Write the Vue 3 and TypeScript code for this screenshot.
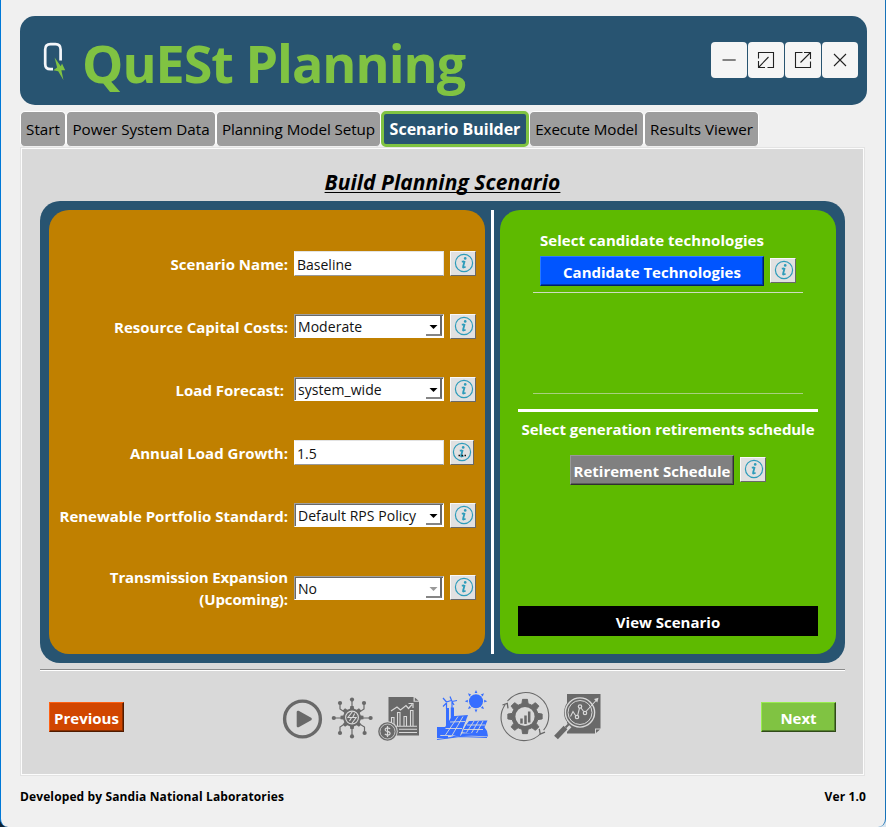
<script setup lang="ts">
import { ref } from 'vue'
import type { Ref } from 'vue'

interface Field {
  label: string
  value: string
  kind: 'text' | 'combo'
  disabled?: boolean
  shifted?: boolean
  dots?: boolean
}

const tabs: string[] = [
  'Start',
  'Power System Data',
  'Planning Model Setup',
  'Scenario Builder',
  'Execute Model',
  'Results Viewer',
]
const activeTab: Ref<string> = ref('Scenario Builder')

const fields: Field[] = [
  { label: 'Scenario Name:', value: 'Baseline', kind: 'text' },
  { label: 'Resource Capital Costs:', value: 'Moderate', kind: 'combo' },
  { label: 'Load Forecast:', value: 'system_wide', kind: 'combo', shifted: true },
  { label: 'Annual Load Growth:', value: '1.5', kind: 'text', dots: true },
  { label: 'Renewable Portfolio Standard:', value: 'Default RPS Policy', kind: 'combo' },
  { label: 'Transmission Expansion\n(Upcoming):', value: 'No', kind: 'combo', disabled: true },
]

/** Builds a closed outline of a gear with flat-topped teeth. */
function gear(cx: number, cy: number, outer: number, inner: number, teeth: number): string {
  const step = (Math.PI * 2) / teeth
  const parts: string[] = []
  for (let i = 0; i < teeth; i++) {
    const a = i * step
    const corners: [number, number][] = [
      [inner, a - step * 0.3],
      [outer, a - step * 0.18],
      [outer, a + step * 0.18],
      [inner, a + step * 0.3],
    ]
    for (const [r, t] of corners) {
      parts.push(`${(cx + r * Math.sin(t)).toFixed(2)} ${(cy - r * Math.cos(t)).toFixed(2)}`)
    }
  }
  return `M${parts.join('L')}Z`
}

const networkGear = gear(352, 717.5, 11.6, 9, 8)
const processGear = gear(525, 716.5, 17.3, 13.2, 8)
const nodes: [number, number][] = [
  [352, 699.6], [352, 736.4], [333.8, 718], [370.6, 718],
  [340, 703], [364, 703], [340, 733], [364.6, 733],
]
const sunRays: number[] = [0, 45, 90, 135, 180, 225, 270, 315]
</script>

<template>
  <div class="window">
    <header class="banner">
      <svg class="logo" viewBox="40 40 30 44" width="30" height="44">
        <path d="M53 70.200H50.500Q45.200 70.200 45.200 65V50.500Q45.200 45.200 50.500 45.200H55.500Q60.600 45.200 60.600 50.500V61.500" fill="none" stroke="#f4f6fa" stroke-width="2.700" />
        <path d="M54.600 58.500L60.800 67.200L62 64.500L65.200 71.300L61.400 71.200L63.400 81L58.200 72.300L53.400 71.300L57.100 68.500Z" fill="#80c342" />
      </svg>
      <h1>QuESt Planning</h1>
      <div class="controls">
        <button aria-label="Minimize"><svg viewBox="0 0 36 36"><path d="M11.500 18H24.700" stroke="#777" stroke-width="1.800" /></svg></button>
        <button aria-label="Restore"><svg viewBox="0 0 36 36"><path d="M10.500 16.500V10.500H25.500V25.500H19.500M10.500 19V25.500H17M10.500 25.500L20.500 15" /></svg></button>
        <button aria-label="Maximize"><svg viewBox="0 0 36 36"><path d="M17.500 10.500H10.500V25.500H25.500V19.500M19 10.500H25.500V17M25.500 10.500L15.500 20.500" /></svg></button>
        <button aria-label="Close"><svg viewBox="0 0 36 36"><path d="M12 12L24 24M24 12L12 24" /></svg></button>
      </div>
    </header>

    <nav class="tabs">
      <button v-for="tab in tabs" :key="tab" :class="{ active: tab === activeTab }" @click="activeTab = tab">{{ tab }}</button>
    </nav>

    <main class="page">
      <h2>Build Planning Scenario</h2>

      <section class="frame">
        <div class="settings">
          <div v-for="field in fields" :key="field.label" class="row">
            <label :class="{ shifted: field.shifted }">{{ field.label }}</label>
            <div v-if="field.kind === 'text'" class="textbox">{{ field.value }}</div>
            <div v-else class="combo" :class="{ disabled: field.disabled }">
              <span>{{ field.value }}</span>
              <i class="drop"><svg viewBox="0 0 15 20" width="15" height="20"><path d="M3.500 9H11.500L7.500 13Z" /></svg></i>
            </div>
            <button class="info" :class="{ small: field.dots }" aria-label="Info">
              <svg viewBox="0 0 20 20"><circle cx="10" cy="10" r="8.600" /><circle class="fill" cx="11.200" cy="5.400" r="1.300" /><path d="M7.800 8.700Q10.500 8.400 10.700 8.100L9 14.300Q9 15 11.600 13.700M10.500 8.400L8.900 14" /><path v-if="field.dots" class="dots" d="M6.500 13.500H8M9.500 13.500H11M12.500 13.500H14" /></svg>
            </button>
          </div>
        </div>

        <div class="divider"></div>

        <div class="actions">
          <h3>Select candidate technologies</h3>
          <div class="pair first">
            <button class="btn candidate">Candidate Technologies</button>
            <button class="info" aria-label="Info"><svg viewBox="0 0 20 20"><circle cx="10" cy="10" r="8.600" /><circle class="fill" cx="11.200" cy="5.400" r="1.300" /><path d="M7.800 8.700Q10.500 8.400 10.700 8.100L9 14.300Q9 15 11.600 13.700M10.500 8.400L8.900 14" /></svg></button>
          </div>
          <div class="list"></div>
          <div class="rule"></div>
          <h3 class="retire">Select generation retirements schedule</h3>
          <div class="pair second">
            <button class="btn retirement">Retirement Schedule</button>
            <button class="info" aria-label="Info"><svg viewBox="0 0 20 20"><circle cx="10" cy="10" r="8.600" /><circle class="fill" cx="11.200" cy="5.400" r="1.300" /><path d="M7.800 8.700Q10.500 8.400 10.700 8.100L9 14.300Q9 15 11.600 13.700M10.500 8.400L8.900 14" /></svg></button>
          </div>
          <button class="view">View Scenario</button>
        </div>
      </section>

      <hr />

      <div class="wizard">
        <button class="btn previous">Previous</button>
        <div class="steps">
          <svg viewBox="280 688 48 56" width="48" height="56">
            <circle cx="302.500" cy="719" r="17.900" fill="none" stroke="#696969" stroke-width="3.400" />
            <path d="M298 712L310.500 719L298 726Z" fill="#696969" stroke="#696969" stroke-width="2.600" stroke-linejoin="round" />
          </svg>
          <svg viewBox="328 688 48 56" width="48" height="56">
            <path d="M352 700V736M334 718H370M340 703V709L346 713M364 703V709L358 713M340 733V727L346 723M364.500 733V727L358 723" fill="none" stroke="#696969" stroke-width="1.200" />
            <path :d="networkGear" fill="#696969" />
            <circle v-for="(node, i) in nodes" :key="i" :cx="node[0]" :cy="node[1]" r="2.100" fill="#696969" />
            <circle cx="352" cy="717.500" r="6.400" fill="none" stroke="#d9d9d9" stroke-width="1.100" />
            <path d="M352.500 711.500L348 717.500H351.500L349.500 721M351.800 723.500L356.200 717.500H352.700L354.700 713.500" fill="none" stroke="#d9d9d9" stroke-width="1.100" />
          </svg>
          <svg viewBox="376 688 50 56" width="50" height="56">
            <path d="M388.500 697H413.500V701.800H419V735.500H388.500Z" fill="#696969" />
            <path d="M414.800 697.500L418.600 700.800H414.800Z" fill="#696969" />
            <path d="M391 711L397 707L400.500 710L406 705.500L408.500 708.500L412 704.500M408.500 703.500H413V708" fill="none" stroke="#d9d9d9" stroke-width="1.200" />
            <path d="M391.500 726V717.500H394V726M397.500 726V712.500H400V726M404 726V716.500H406.500V726M410.500 726V710.500H413V726M389 726.300H417M399 729.300H417M399 732.500H417" fill="none" stroke="#d9d9d9" stroke-width="1.100" />
            <circle cx="387.500" cy="731.500" r="10.200" fill="#d9d9d9" />
            <circle cx="387.500" cy="731.500" r="8.500" fill="#696969" stroke="#696969" stroke-width="1.600" />
            <circle cx="387.500" cy="731.500" r="7.500" fill="none" stroke="#d9d9d9" stroke-width=".8" />
            <path d="M390.200 728.800Q387.500 727 385.500 728.600Q384.300 731 387.500 731.400Q391 732.300 389.800 734.300Q388 736 384.800 734M387.500 726V737" fill="none" stroke="#d9d9d9" stroke-width="1.200" />
          </svg>
          <svg viewBox="426 688 68 56" width="68" height="56">
            <g fill="#366eff">
              <circle cx="476" cy="701.200" r="7" />
              <path v-for="ray in sunRays" :key="ray" d="M476 690L477.400 693H474.600Z" :transform="`rotate(${ray} 476 701.200)`" />
              <path d="M446 708H449V722L446 728ZM450.800 707.500H454V716L450.800 721Z" />
              <path d="M437 727H446L440 736H448V738H437Z" />
              <path d="M452 716.200L468 715L460 735.500L440 735Z" />
              <path d="M469 721L487.500 720.500L481 735L461 732Z" />
              <path d="M483.500 726L487 731L488 736.500Q462 734 444 739Q454 736 460 733.500L478 733Z" />
            </g>
            <g fill="none" stroke="#366eff" stroke-width="1.200">
              <path d="M446.500 703V709M452 702V709M446.500 703L443 706.500M446.500 702L443 698M446.500 702L451 700.500M452 701.500L450 696.500M452 701.500L457 700.500M452 701.500L454 705" />
              <path d="M437 739.500L460 736.500L487 737.500" />
            </g>
            <path d="M458 716.500L445.500 735M463 716.500L452 735.500M450 722L465 721.500M445.500 728.500L462 728.500M474 721L466.500 732.500M478.500 721L471.500 733M483 721L476.500 733M467 725H485M464 729.500H483" fill="none" stroke="#d9d9d9" stroke-width=".9" />
            <path d="M469 716L460.500 735.500" fill="none" stroke="#d9d9d9" stroke-width="1" />
          </svg>
          <svg viewBox="494 688 56 56" width="56" height="56">
            <path d="M507.500 701.200A23 23 0 0 1 543.600 730.200M541.200 733A23 23 0 0 1 505.200 704.500" fill="none" stroke="#696969" stroke-width="1.100" />
            <path d="M502.500 705L507.300 703.300L508 708.300M539.300 728.800L540.200 734.200L545 732.200" fill="none" stroke="#696969" stroke-width="1.300" />
            <path :d="processGear" fill="#696969" stroke="#696969" stroke-width="1" stroke-linejoin="round" />
            <circle cx="525" cy="716.500" r="9.600" fill="#d9d9d9" />
            <path d="M521.500 723.500V718.500M525.500 724V715.500M529.200 722.500V711.500" stroke="#696969" stroke-width="2.500" />
          </svg>
          <svg viewBox="550 688 56 56" width="56" height="56">
            <path d="M567 694H600.500V728.500H595V733.500H567Z" fill="#696969" />
            <path d="M596 733V729.500H600Z" fill="#696969" />
            <path d="M568.500 724.500L556.500 737" stroke="#d9d9d9" stroke-width="8" />
            <path d="M570 723L565.500 727.500" stroke="#696969" stroke-width="2" />
            <path d="M565.500 727.500L556 737.500" stroke="#696969" stroke-width="5.200" />
            <circle cx="580" cy="712.500" r="16" fill="#696969" />
            <circle cx="580" cy="712.500" r="14.600" fill="none" stroke="#d9d9d9" stroke-width="1.400" />
            <circle cx="580" cy="712.500" r="12" fill="none" stroke="#d9d9d9" stroke-width="1" />
            <path d="M570.500 716.500L573 711.500L575.700 715.800M577.700 715.300L579.500 708M581 708L583.700 711.500M586 711.500L596.500 700" fill="none" stroke="#d9d9d9" stroke-width="1.100" />
            <path d="M594 699L598.500 697.800L597.300 702.500Z" fill="#d9d9d9" />
            <g fill="none" stroke="#d9d9d9" stroke-width="1.200"><circle cx="577" cy="717" r="1.700" /><circle cx="580" cy="706.500" r="1.700" /><circle cx="585" cy="713" r="1.700" /></g>
          </svg>
        </div>
        <button class="btn next">Next</button>
      </div>
    </main>

    <footer class="status">
      <span>Developed by Sandia National Laboratories</span>
      <span>Ver 1.0</span>
    </footer>
  </div>
</template>

<style>
body {
  background: linear-gradient(90deg, #0c2135 50%, #dce6ee 50%);
}
</style>

<style scoped>
* {
  box-sizing: border-box;
}
button {
  font: inherit;
  color: inherit;
  padding: 0;
  border: 0;
}
svg {
  display: block;
}
.window {
  display: flex;
  flex-direction: column;
  width: 886px;
  height: 827px;
  padding: 16px 18px 0 19px;
  overflow: hidden;
  background: #f0f0f0;
  border-left: 1px solid #0078d7;
  border-right: 1px solid #1773b9;
  border-radius: 0 0 8px 8px;
  font-family: 'Open Sans', 'Noto Sans', sans-serif;
  font-size: 15px;
}
.banner {
  display: flex;
  align-items: center;
  height: 89px;
  padding: 0 9px 0 20px;
  background: #285471;
  border-radius: 15px;
}
.banner h1 {
  margin: 5px 0 0 12px;
  color: #80c342;
  font-size: 52px;
  font-weight: 700;
  line-height: 70px;
  letter-spacing: -1px;
  white-space: nowrap;
}
.controls {
  display: flex;
  gap: 1px;
  margin: -1px 0 0 auto;
}
.controls button {
  width: 36px;
  height: 36px;
  background: #f5f5f5;
  border-radius: 4px;
}
.controls svg {
  width: 36px;
  height: 36px;
  fill: none;
  stroke: #222;
  stroke-width: 1.1;
}
.tabs {
  display: flex;
  align-items: flex-start;
  height: 42px;
  padding: 6px 0 0;
}
.tabs button {
  flex: none;
  height: 36px;
  border: 1px solid #fff;
  border-bottom-color: #f0f0f0;
  border-radius: 5px;
  background: #9d9d9d;
  color: #000;
  font-size: 15.2px;
  line-height: 32px;
  white-space: nowrap;
}
.tabs button:nth-child(1) { width: 46px; }
.tabs button:nth-child(2) { width: 150px; }
.tabs button:nth-child(3) { width: 165px; letter-spacing: -0.08px; }
.tabs button.active {
  width: 148px;
  border: 3px solid #80c342;
  background: #285471;
  color: #fff;
  font-size: 16px;
  font-weight: 700;
  line-height: 28px;
}
.tabs button:nth-child(5) { width: 115px; letter-spacing: -0.1px; }
.tabs button:nth-child(6) { width: 115px; }
.page {
  height: 629px;
  width: 845px;
  padding: 21px 18px 0 18px;
  background: #d9d9d9;
  border: 1px solid #e3e3e3;
  box-shadow: inset 0 0 0 1px #fcfcfc;
}
.page h2 {
  width: fit-content;
  margin: 0 auto;
  height: 32px;
  font-size: 21px;
  font-style: italic;
  font-weight: 700;
  line-height: 26px;
  letter-spacing: 0.07px;
  text-decoration: underline;
  text-decoration-thickness: 1px;
  text-underline-offset: 2px;
  text-decoration-skip-ink: none;
}
.frame {
  display: flex;
  width: 805px;
  height: 462px;
  margin-left: 1px;
  padding: 9px;
  background: #285471;
  border-radius: 20px;
}
.settings {
  display: flex;
  flex-direction: column;
  gap: 38px;
  width: 436px;
  padding-top: 41px;
  background: #c08000;
  border-radius: 20px;
}
.row {
  display: grid;
  grid-template-columns: 239px 150px 26px;
  column-gap: 6px;
  align-items: start;
  height: 25px;
  color: #fff;
}
.row:last-child {
  align-items: center;
  height: 44px;
}
.row label {
  padding-top: 2px;
  font-weight: 700;
  line-height: 22px;
  text-align: right;
  white-space: pre;
}
.row:last-child label {
  padding-top: 0;
  letter-spacing: -0.1px;
}
.row label.shifted {
  padding-right: 4px;
}
.textbox,
.combo {
  background: #fff;
  color: #111;
  font-size: 14px;
  white-space: nowrap;
}
.textbox {
  height: 25px;
  padding-left: 2px;
  border: 1px solid #e3e3e3;
  border-left-color: #fff;
  border-bottom-color: #999;
  line-height: 25px;
}
.combo {
  display: flex;
  justify-content: space-between;
  height: 24px;
  padding: 0 1px 1px 3px;
  border: 1px solid #a0a0a0;
  border-right-color: #fff;
  border-bottom-color: #fff;
  box-shadow: inset 1px 1px #696969;
  letter-spacing: 0.05px;
  line-height: 23px;
}
.combo .drop {
  width: 16px;
  margin-top: 1px;
  height: 20px;
  border-right: 2px solid #696969;
  border-bottom: 2px solid #858585;
}
.combo path {
  fill: #000;
}
.combo.disabled path {
  fill: #999;
}
.info {
  display: flex;
  align-items: flex-start;
  justify-content: center;
  width: 26px;
  height: 25px;
  padding-top: 1px;
  background: #e1e1e1;
  border: 1px solid #f8f8f8;
  border-right-color: #696969;
  border-bottom-color: #696969;
}
.row:last-child .info {
  margin-bottom: 1px;
}
.info.small {
  width: 24px;
}
.info svg {
  width: 20px;
  height: 20px;
  margin-left: 1px;
  fill: none;
  stroke: #2e9cba;
  stroke-width: 1.2;
}
.info.small svg {
  margin-left: 0;
}
.info path {
  stroke-width: 1.7;
}
.info .fill {
  fill: #2e9cba;
  stroke: none;
}
.info .dots {
  stroke: #111;
}
.divider {
  width: 3px;
  margin: 0 6px;
  background: #fff;
}
.actions {
  display: flex;
  flex-direction: column;
  align-items: center;
  width: 336px;
  padding: 19px 0 18px;
  background: #5eba00;
  border-radius: 20px;
  color: #fff;
  font-weight: 700;
}
.actions h3 {
  width: 256px;
  margin: 0;
  font-size: 15px;
  line-height: 22px;
  white-space: nowrap;
  letter-spacing: 0.05px;
}
.actions h3.retire {
  width: auto;
  margin-top: 6px;
  letter-spacing: -0.06px;
}
.pair {
  display: flex;
  gap: 6px;
}
.pair.first {
  width: 256px;
  margin-top: 5px;
}
.pair.second {
  width: 196px;
  margin-top: 15px;
}
.pair .info {
  margin-top: 2px;
}
.btn {
  height: 30px;
  border: 1px solid;
  color: #fff;
  font-weight: 700;
  line-height: 30px;
  white-space: nowrap;
}
.candidate {
  width: 224px;
  background: #0055ff;
  border-color: #2b78ff #001f65 #001f65 #2b78ff;
  box-shadow: inset -1px -1px #0039aa;
}
.retirement {
  width: 164px;
  background: #808080;
  border-color: #999 #303030 #303030 #999;
  box-shadow: inset -1px -1px #5b5b5b;
}
.previous {
  width: 75px;
  background: #d14600;
  border-color: #ff6012 #501b00 #501b00 #ff6012;
  box-shadow: inset -1px -1px #8b2f00;
}
.next {
  width: 75px;
  background: #80c342;
  border-color: #99ec4f #304b19 #304b19 #99ec4f;
  box-shadow: inset -1px -1px #55822c;
}
.list {
  width: 270px;
  height: 102px;
  margin-top: 6px;
  border-top: 1px solid #cfddc0;
  border-bottom: 1px solid #a8d080;
}
.rule {
  width: 300px;
  height: 3px;
  margin-top: 15px;
  background: #fff;
}
.view {
  width: 300px;
  height: 30px;
  margin-top: auto;
  background: #000;
  line-height: 32px;
}
hr {
  width: 805px;
  height: 2px;
  margin: 6px 0 0 1px;
  border: 0;
  border-top: 1px solid #8c8c8c;
  background: #fff;
}
.wizard {
  display: flex;
  justify-content: space-between;
  width: 787px;
  margin: 17px 0 0 10px;
}
.wizard .btn {
  margin-top: 14px;
  line-height: 31px;
}
.steps {
  display: flex;
  padding-left: 1px;
}
.status {
  display: flex;
  justify-content: space-between;
  padding: 13px 1px 0 0;
  font-size: 12px;
  font-weight: 700;
  line-height: 16px;
  letter-spacing: 0.12px;
}
</style>
